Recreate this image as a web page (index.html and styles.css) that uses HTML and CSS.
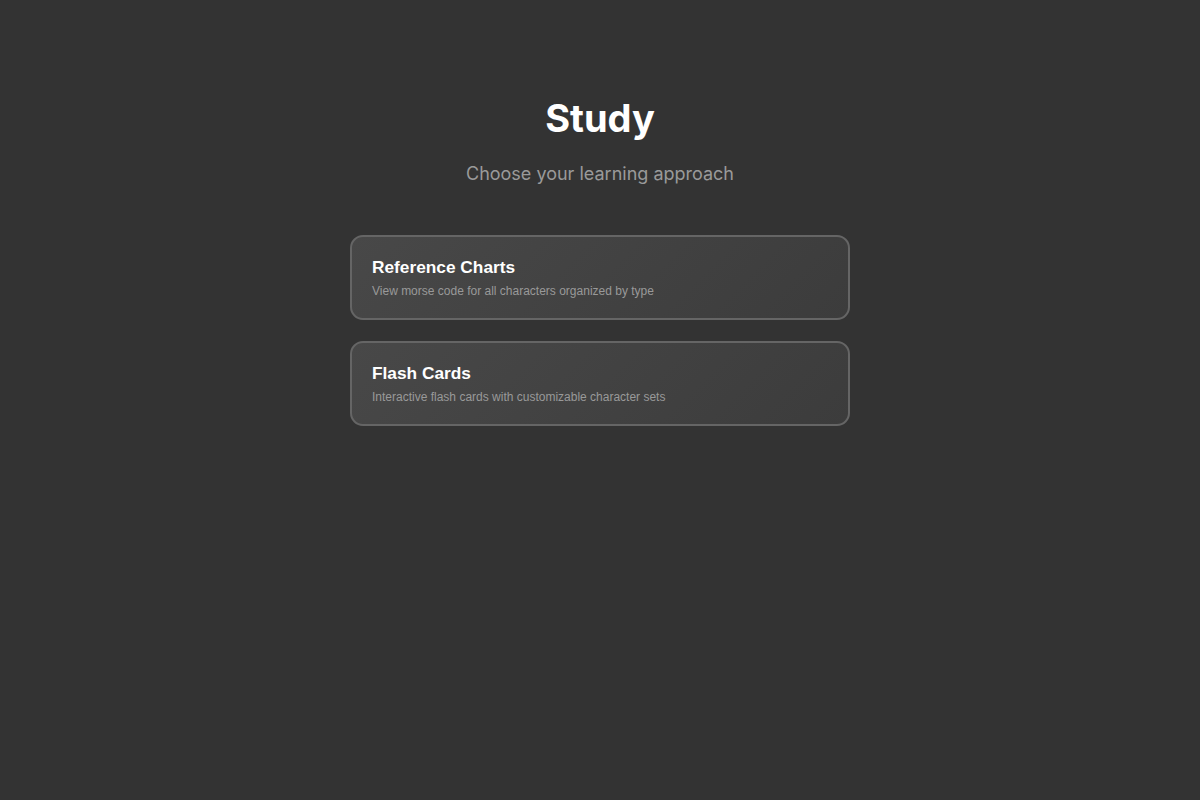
FILE: index.html
```html
<!DOCTYPE html>
<html lang="en">
<head>
<meta charset="utf-8">
<title>Study</title>
<link rel="stylesheet" href="styles.css">
</head>
<body>
<main class="page">
  <header class="hero">
    <h1 class="title">Study</h1>
    <p class="subtitle">Choose your learning approach</p>
  </header>
  <section class="options">
    <a class="card" href="#">
      <h2 class="card-title">Reference Charts</h2>
      <p class="card-desc">View morse code for all characters organized by type</p>
    </a>
    <a class="card" href="#">
      <h2 class="card-title">Flash Cards</h2>
      <p class="card-desc">Interactive flash cards with customizable character sets</p>
    </a>
  </section>
</main>
</body>
</html>
```
FILE: styles.css
```css
html, body {
  margin: 0;
  padding: 0;
  background: #333333;
  height: 100%;
}
body {
  font-family: Inter, "Liberation Sans", sans-serif;
  color: #ffffff;
}
.page {
  display: flex;
  flex-direction: column;
  align-items: center;
  padding-top: 96px;
}
.hero {
  text-align: center;
  margin-bottom: 50px;
}
.title {
  margin: 0;
  font-size: 38px;
  font-weight: 700;
  line-height: 44px;
  letter-spacing: 0;
}
.subtitle {
  margin: 23px 0 0;
  font-size: 18px;
  line-height: 22px;
  color: #9a9a9a;
}
.options {
  display: flex;
  flex-direction: column;
  gap: 21px;
  width: 500px;
}
.card {
  display: block;
  box-sizing: border-box;
  height: 85px;
  padding: 20px 20px;
  border: 2px solid #656565;
  border-radius: 13px;
  background: linear-gradient(135deg, #484848 0%, #3c3c3c 100%);
  text-decoration: none;
  font-family: "Liberation Sans", Arial, sans-serif;
}
.card-title {
  margin: 0;
  font-size: 17.3px;
  font-weight: 700;
  line-height: 21px;
  color: #ffffff;
}
.card-desc {
  margin: 6px 0 0;
  font-size: 12px;
  line-height: 15px;
  color: #999999;
}
```
